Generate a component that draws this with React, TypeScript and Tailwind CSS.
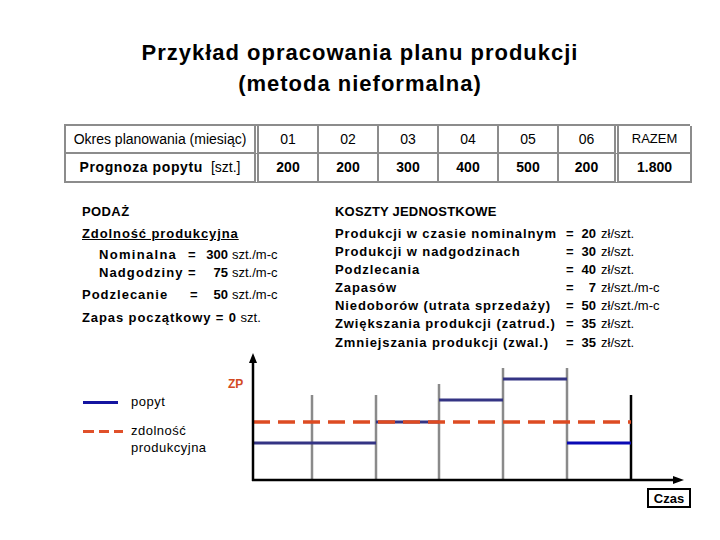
import React from "react";

const F = { fontFamily: '"Liberation Sans", Arial, sans-serif' };

export default function App() {
  const head = ["01", "02", "03", "04", "05", "06"];
  const vals = ["200", "200", "300", "400", "500", "200"];
  const costs: [string, string, string][] = [
    ["Produkcji w czasie nominalnym", "20", "zł/szt."],
    ["Produkcji w nadgodzinach", "30", "zł/szt."],
    ["Podzlecania", "40", "zł/szt."],
    ["Zapasów", "7", "zł/szt./m-c"],
    ["Niedoborów (utrata sprzedaży)", "50", "zł/szt./m-c"],
    ["Zwiększania produkcji (zatrud.)", "35", "zł/szt."],
    ["Zmniejszania produkcji (zwal.)", "35", "zł/szt."],
  ];
  const cell = "flex items-center justify-center border-r-2 border-b-2 border-[#8c8c8c]";
  return (
    <div className="w-[720px] h-[540px] bg-white text-black overflow-hidden" style={F}>
      {/* Title */}
      <div className="h-[124px] pt-[37px] text-center font-bold text-[22px] leading-[31px] tracking-[1px]">
        <div>Przykład opracowania planu produkcji</div>
        <div>(metoda nieformalna)</div>
      </div>

      {/* Table */}
      <div className="ml-[64px] w-[626px] grid grid-cols-[193px_60px_60px_60px_60px_60px_60px_73px] border-l-2 border-t-2 border-[#8c8c8c]">
        <div className={`${cell} h-[28px] text-[14px] border-r-[5px] border-double`}>Okres planowania (miesiąc)</div>
        {head.map((h, i) => (
          <div key={h} className={`${cell} h-[28px] text-[14px] ${i === 5 ? "border-r-[5px] border-double" : ""}`}>{h}</div>
        ))}
        <div className={`${cell} h-[28px] text-[13px]`}>RAZEM</div>
        <div className={`${cell} h-[29px] text-[14px] border-r-[5px] border-double`}>
          <span className="font-bold tracking-[0.6px]">Prognoza popytu</span>
          <span className="ml-[8px]">[szt.]</span>
        </div>
        {vals.map((v, i) => (
          <div key={i} className={`${cell} h-[29px] text-[14px] font-bold ${i === 5 ? "border-r-[5px] border-double" : ""}`}>{v}</div>
        ))}
        <div className={`${cell} h-[29px] text-[14px] font-bold`}>1.800</div>
      </div>

      {/* Text area */}
      <div className="h-[167px] flex text-[13px] leading-[18px]">
        <div className="w-[335px] pl-[82px] pt-[20px]">
          <div className="font-bold tracking-[0.4px]">PODAŻ</div>
          <div className="mt-[4px] font-bold underline tracking-[0.9px]">Zdolność produkcyjna</div>
          <div className="mt-[3px] pl-[17px] grid grid-cols-[89px_12px_28px_auto] font-bold">
            <span className="tracking-[1.3px]">Nominalna</span><span>=</span><span className="text-right">300</span><span className="font-normal pl-[4px]">szt./m-c</span>
            <span className="tracking-[1.1px]">Nadgodziny</span><span>=</span><span className="text-right">75</span><span className="font-normal pl-[4px]">szt./m-c</span>
          </div>
          <div className="mt-[4px] grid grid-cols-[106px_12px_28px_auto] font-bold">
            <span className="tracking-[1px]">Podzlecanie</span><span className="pl-[2px]">=</span><span className="text-right">50</span><span className="font-normal pl-[4px]">szt./m-c</span>
          </div>
          <div className="mt-[5px]">
            <span className="font-bold tracking-[0.9px]">Zapas początkowy = 0</span> <span>szt.</span>
          </div>
        </div>
        <div className="pt-[20px]">
          <div className="font-bold tracking-[0.2px]">KOSZTY JEDNOSTKOWE</div>
          <div className="mt-[4px] grid grid-cols-[231px_12px_18px_auto] font-bold">
            {costs.map(([l, v, u], i) => (
              <React.Fragment key={i}>
                <span className={`tracking-[0.9px] whitespace-nowrap ${i === 6 ? "pt-[1px]" : ""}`}>{l}</span>
                <span className={i === 6 ? "pt-[1px]" : ""}>=</span>
                <span className={`text-right ${i === 6 ? "pt-[1px]" : ""}`}>{v}</span>
                <span className={`font-normal pl-[5px] ${i === 6 ? "pt-[1px]" : ""}`}>{u}</span>
              </React.Fragment>
            ))}
          </div>
        </div>
      </div>

      {/* Chart area */}
      <div className="flex h-[160px]">
        <div className="w-[220px] pl-[83px] pt-[43px] text-[13px] tracking-[0.5px]">
          <div className="flex items-center h-[18px]">
            <div className="w-[35px] h-[3px] bg-[#1414a0]" />
            <span className="ml-[13px]">popyt</span>
          </div>
          <div className="flex mt-[11px]">
            <div className="flex gap-[5px] w-[40px] h-[18px] items-center">
              <div className="w-[12px] h-[3px] bg-[#e0502a]" />
              <div className="w-[12px] h-[3px] bg-[#e0502a]" />
              <div className="w-[10px] h-[3px] bg-[#e0502a]" />
            </div>
            <div className="ml-[8px] leading-[17px]">
              <div>zdolność</div>
              <div>produkcyjna</div>
            </div>
          </div>
        </div>
        <svg width="500" height="160" viewBox="0 0 500 160">
          <g stroke="#8a8a8a" strokeWidth="2.5">
            <line x1="92" y1="45" x2="92" y2="130" />
            <line x1="156" y1="45" x2="156" y2="130" />
            <line x1="219" y1="34" x2="219" y2="130" />
            <line x1="283" y1="18" x2="283" y2="130" />
            <line x1="347" y1="18" x2="347" y2="130" />
          </g>
          <line x1="411" y1="45" x2="411" y2="130" stroke="#000" strokeWidth="2.5" />
          <g stroke="#343484" strokeWidth="3">
            <line x1="33" y1="93" x2="156" y2="93" />
            <line x1="156" y1="72" x2="219" y2="72" />
            <line x1="219" y1="50" x2="283" y2="50" />
            <line x1="283" y1="29" x2="347" y2="29" />
          </g>
          <line x1="347" y1="93" x2="411" y2="93" stroke="#0a0ab4" strokeWidth="3" />
          <line x1="33" y1="72" x2="411" y2="72" stroke="#dd4b22" strokeWidth="3.5" strokeDasharray="17 8" />
          <line x1="33" y1="10" x2="33" y2="131" stroke="#000" strokeWidth="2.5" />
          <polygon points="33,3 29,13 37,13" fill="#000" />
          <line x1="32" y1="130" x2="456" y2="130" stroke="#000" strokeWidth="2.5" />
          <polygon points="464,130 453,126 453,134" fill="#000" />
          <text x="8" y="38" fontSize="12" fontWeight="bold" fill="#d34a22" style={F}>ZP</text>
          <rect x="428" y="139" width="42" height="18" fill="#fff" stroke="#000" strokeWidth="2" />
          <text x="449" y="152.5" fontSize="13" fontWeight="bold" textAnchor="middle" fill="#000" style={F}>Czas</text>
        </svg>
      </div>
    </div>
  );
}
